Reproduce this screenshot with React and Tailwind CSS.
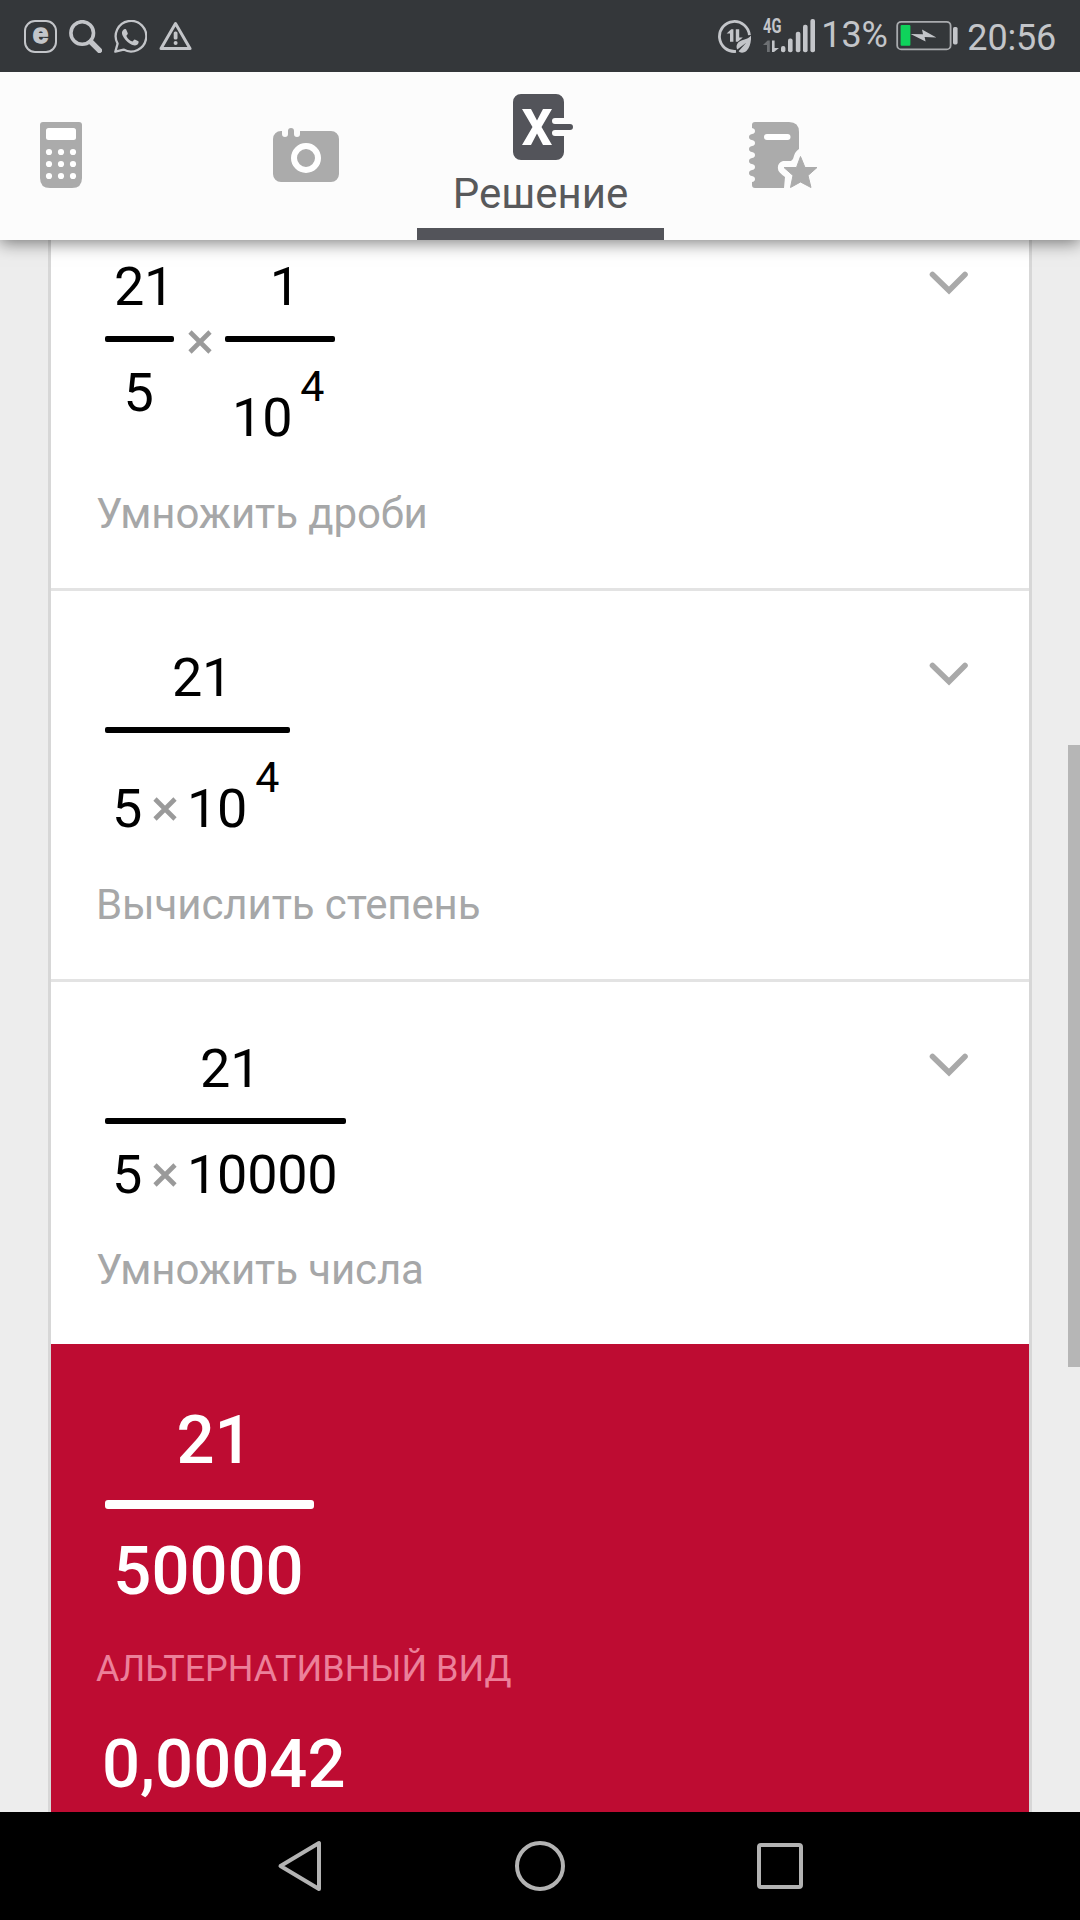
const StatusBar = () => (
  <div className="relative z-20 h-[72px] bg-[#34373a] text-[#c3c5c9] flex justify-between px-6 shrink-0">
    <div className="flex gap-3 pt-5">
      {/* e in a squircle */}
      <div className="w-[33px] h-[33px] border-2 border-[#c3c5c9] rounded-[11px] flex items-center justify-center">
        <span className="font-['Liberation_Sans'] font-bold text-[28px] leading-[28px] -mt-[6px] [-webkit-text-stroke:1.5px_#c3c5c9]">e</span>
      </div>
      <svg width="33" height="33" viewBox="0 0 33 33" fill="none" stroke="#c3c5c9">
        <circle cx="13.2" cy="13" r="11.3" strokeWidth="3.6" />
        <path d="M22 22 30.4 30.4" strokeWidth="5.4" strokeLinecap="round" />
      </svg>
      <svg width="33" height="33" viewBox="0 0 33 33">
        <path d="M1.3 31.7 3.6 23.6A15.3 15.3 0 1 1 9.6 29.6Z" fill="none" stroke="#c3c5c9" strokeWidth="2.3" strokeLinejoin="round" />
        <path d="M9 10.2C10.4 8.6 12 8.8 12.6 10.4L13.8 13.2C14 14.2 12.6 15.2 12.4 15.9C13.6 18.6 15.8 20.6 18.4 21.6C19.4 21 19.8 19.6 20.8 19.6L24.4 21.2C25 22 24.4 24 23.2 24.8C21 26 18.6 25.2 16 23.8C12.6 21.9 10 18.8 8.6 15.6C7.6 13.4 7.8 11.4 9 10.2Z" fill="#c3c5c9" />
      </svg>
      <svg width="33" height="33" viewBox="0 0 33 33">
        <path d="M16.5 3.6 31 28.5H2Z" fill="none" stroke="#c3c5c9" strokeWidth="3" strokeLinejoin="round" />
        <rect x="14.7" y="11.5" width="3.8" height="8" rx="1.6" fill="#c3c5c9" />
        <circle cx="16.6" cy="23" r="2" fill="#c3c5c9" />
      </svg>
    </div>
    <div className="flex">
      <svg className="mt-5" width="33" height="33" viewBox="0 0 33 33">
        <path d="M18 31.4A15 15 0 1 1 31.4 15.2" fill="none" stroke="#c3c5c9" strokeWidth="2.8" />
        <path d="M8.6 13.6 13.2 9.3H15.400V21.8H12V13.5H8.6ZM17.8 9.3H21.200V17.4H24.8L19.800 21.8H17.8Z" fill="#c3c5c9" />
        <path d="M33 15.5C33.4 22 31.8 28 28.4 31C25.6 33.3 22 33 20.6 31.2L28.2 22.8 19.3 29.6C17.8 27 18.4 23 22 21.2C26 19.5 30 19.2 33 15.5Z" fill="#c3c5c9" />
      </svg>
      <div className="ml-3 w-[53px] pt-[19px]">
        <div className="relative h-[34px]">
          <span className="absolute left-0 -top-[3px] text-[21px] leading-[21px] font-bold origin-left scale-x-[0.7]">4G</span>
          <svg width="53" height="34" viewBox="0 0 53 34" fill="#c3c5c9">
            <path d="M0 26 4.6 21.6H6.8V33H4V26Z" fill="#6d7073" />
            <path d="M9 21.6H11.6V29H16L11 33H9Z" />
            <rect x="18" y="27" width="4.4" height="6.2" rx="2" />
            <rect x="25" y="19.6" width="4.6" height="13.6" rx="2" />
            <rect x="32.8" y="12.8" width="4.6" height="20.4" rx="2" />
            <rect x="40" y="5.8" width="4.6" height="27.4" rx="2" />
            <rect x="47.4" y="0" width="4.6" height="33.2" rx="2" />
          </svg>
        </div>
      </div>
      <span className="ml-[5px] w-[75px] text-[36px] leading-[42px] pt-[14px] tracking-[-0.2px]">13%</span>
      <svg className="mt-5" width="64" height="32" viewBox="0 0 64 32">
        <rect x="1.2" y="1.8" width="53.4" height="27.6" rx="4" fill="none" stroke="#a9abae" strokeWidth="1.8" />
        <rect x="4.6" y="5" width="9.8" height="20.8" rx="1" fill="#0fd35b" />
        <path d="M14.6 14 27 14.2 26 9.4 40.4 17.4 28.6 17 29.6 21.4Z" fill="#c3c5c9" />
        <rect x="57" y="7" width="4.6" height="17.4" rx="1.6" fill="#c3c5c9" />
      </svg>
      <span className="ml-[7px] text-[36px] leading-[42px] pt-[17px] tracking-[-0.2px]">20:56</span>
    </div>
  </div>
);

const Tabs = () => (
  <nav className="relative z-10 h-[168px] shrink-0 bg-[#fcfcfc] flex items-start shadow-[0_3px_16px_rgba(0,0,0,0.5)]">
    <svg className="mt-[50px] ml-10" width="42" height="66" viewBox="0 0 42 66">
      <path d="M3 0H39Q42 0 42 3V56Q42 66 32 66H10Q0 66 0 56V3Q0 0 3 0Z" fill="#ababab" />
      <rect x="6" y="6" width="30" height="12" rx="2.5" fill="#fff" />
      {[30, 42, 54].map((y) =>
        [9, 21, 33].map((x) => <circle key={x + '-' + y} cx={x} cy={y} r="3.1" fill="#fff" />)
      )}
    </svg>
    <svg className="mt-14 ml-[191px]" width="66" height="54" viewBox="0 0 66 54">
      <path d="M8 3H9V6A3 3 0 0 0 15 6V3A3 3 0 0 1 21 3V6A3 3 0 0 0 27 6V3H58A8 8 0 0 1 66 11V46A8 8 0 0 1 58 54H8A8 8 0 0 1 0 46V11A8 8 0 0 1 8 3Z" fill="#ababab" />
      <circle cx="33" cy="30" r="12" fill="none" stroke="#fff" strokeWidth="6" />
    </svg>
    <div className="ml-[78px] w-[247px] h-full flex flex-col items-center border-b-12 border-[#53545a]">
      <svg className="mt-[22px] ml-[5px]" width="60" height="66" viewBox="0 0 60 66">
        <path d="M8 0H43A8 8 0 0 1 51 8V24H42A3 3 0 0 0 42 30H57A3 3 0 0 1 57 36H42A3 3 0 0 0 42 42H51V58A8 8 0 0 1 43 66H8A8 8 0 0 1 0 58V8A8 8 0 0 1 8 0Z" fill="#53545a" />
        <path d="M9 15H18L24 26.5 30 15H39L28.5 33 39 51H30L24 39.5 18 51H9L19.5 33Z" fill="#fff" />
      </svg>
      <span className="mt-[10px] text-[42px] leading-[48px] text-[#58595b]">Решение</span>
    </div>
    <svg className="mt-[50px] ml-[85px]" width="70" height="66" viewBox="0 0 70 66">
      <path
        d="M6 0H40Q50 0 50 10V27Q46 29 44 37L42 39H34Q28 41 29 47Q29 50 36 55L35 66H6Q3 66 3 63V60Q6 59.500 6 57Q6 54.500 3 54Q0 53.500 0 51Q0 48.500 3 48Q6 47.500 6 45Q6 42.500 3 42Q0 41.500 0 39Q0 36.500 3 36Q6 35.500 6 33Q6 30.500 3 30Q0 29.500 0 27Q0 24.500 3 24Q6 23.500 6 21Q6 18.500 3 18Q0 17.500 0 15Q0 12.500 3 12Q6 11.500 6 9Q6 6.500 3 6V3Q3 0 6 0Z"
        fill="#ababab"
      />
      <rect x="15" y="12" width="26.500" height="6" rx="3" fill="#fff" />
      <path d="M51.500 34.500 56 45.500H68L59 53.500 62 65.500 51.500 60 41.500 65.500 44 53.500 35 45.500H47.500Z" fill="#ababab" stroke="#ababab" strokeLinejoin="round" />
    </svg>
  </nav>
);

const Times = ({ className = 'w-[45px]' }) => (
  <span className={`${className} flex items-center justify-center`}>
    <svg width="24" height="24" viewBox="0 0 24 24">
      <path d="M2 2 22 22M22 2 2 22" stroke="#9a9a9a" strokeWidth="4.6" />
    </svg>
  </span>
);

const Power = ({ base, exp }) => (
  <span className="flex">
    {base}
    <sup className="ml-2 mr-[2px] w-6 text-[43px] leading-[64px] top-0 h-0 -mt-[32px]">{exp}</sup>
  </span>
);

// numerators end in "1", so they sit slightly right of the middle
const Fraction = ({ top, children, raised }) => (
  <div className="flex flex-col items-center text-[54px] leading-[64px] tracking-[-0.3px]">
    <span className="ml-[9px]">{top}</span>
    <div className="mt-[17px] w-full h-[6px] rounded-[2px] bg-black" />
    <div className={`pl-[7px] pr-[9px] flex ${raised ? 'mt-[44px]' : 'mt-[19px]'}`}>{children}</div>
  </div>
);

const Chevron = () => (
  <svg className="mt-[71px] mr-[60px] shrink-0" width="40" height="26" viewBox="0 0 40 26">
    <path d="M3.500 3.500 20 19.500 36 3.500" fill="none" stroke="#a9a9a9" strokeWidth="5.600" strokeLinecap="round" />
  </svg>
);

const Step = ({ label, last, children }) => (
  <section className={`flex justify-between items-start ${last ? 'h-[362px]' : 'h-[391px] border-b-3 border-[#e3e3e3]'}`}>
    <div className="flex flex-col h-full pt-[55px] pb-[50px]">
      <div className="ml-[54px] flex items-start">{children}</div>
      <p className="mt-auto ml-[45px] text-[42px] leading-[48px] tracking-[-0.1px] text-[#a6a7a8]">{label}</p>
    </div>
    <Chevron />
  </section>
);

const Result = () => (
  <section className="bg-[#be0c32] text-white font-medium flex-1 pt-[58px] text-[67px] leading-[76px]">
    <div className="ml-[54px] w-[209px] flex flex-col items-center">
      <span className="ml-[10px]">21</span>
      <div className="mt-[22px] w-full h-[9px] rounded-[3px] bg-white" />
      <span className="mt-[24px] mr-[2px]">50000</span>
    </div>
    <p className="mt-[39px] ml-[45px] text-[36px] leading-[42px] font-normal text-[#ec809a]">АЛЬТЕРНАТИВНЫЙ ВИД</p>
    <div className="mt-[36px] ml-[51px]">0,00042</div>
  </section>
);

const NavBar = () => (
  <div className="h-[108px] shrink-0 bg-black flex items-center">
    <svg className="ml-[277px]" width="46" height="54" viewBox="0 0 46 54" fill="none" stroke="#b3b3b3" strokeWidth="4" strokeLinejoin="round">
      <path d="M42 4V50L3.500 27Z" />
    </svg>
    <div className="ml-[192px] w-[50px] h-[50px] rounded-full border-4 border-[#b3b3b3]" />
    <div className="ml-[192px] w-[46px] h-[46px] rounded-[4px] border-4 border-[#b3b3b3]" />
  </div>
);

export default function App() {
  return (
    <div className="w-[1080px] h-[1920px] flex flex-col overflow-hidden bg-[#ededed] font-[Roboto,sans-serif]">
      <StatusBar />
      <Tabs />
      <main className="flex-1 min-h-0 flex overflow-hidden">
        <div className="ml-12 w-[984px] -mt-10 border-x-3 border-[#d7d7d7] bg-white text-black flex flex-col">
          <Step label="Умножить дроби">
            <Fraction top="21">5</Fraction>
            <Times className="w-[51px] h-[171px] pt-[2px]" />
            <Fraction top="1" raised>
              <Power base="10" exp="4" />
            </Fraction>
          </Step>
          <Step label="Вычислить степень">
            <Fraction top="21" raised>
              5<Times /><Power base="10" exp="4" />
            </Fraction>
          </Step>
          <Step label="Умножить числа" last>
            <Fraction top="21">
              5<Times />10000
            </Fraction>
          </Step>
          <Result />
        </div>
        <div className="ml-auto mt-[505px] w-3 h-[622px] bg-[#b6b6b6]" />
      </main>
      <NavBar />
    </div>
  );
}
